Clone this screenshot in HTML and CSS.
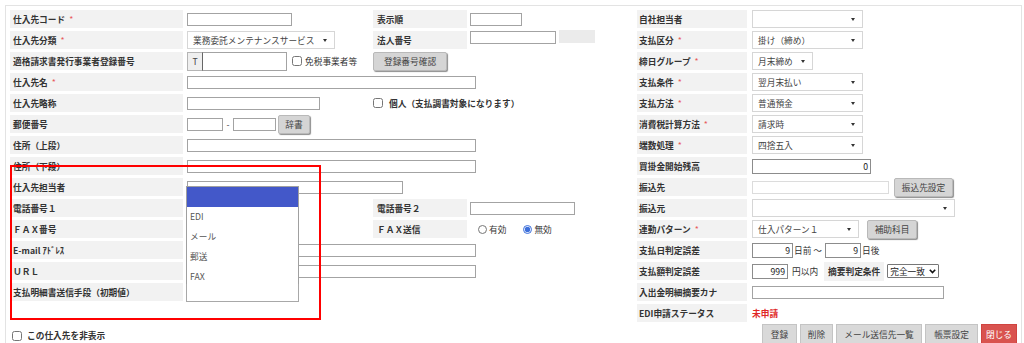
FILE: index.html
```html
<!DOCTYPE html>
<html lang="ja">
<head>
    <meta charset="UTF-8">
    <title>仕入先登録</title>
    <link rel="stylesheet" href="styles.css">
</head>
<body>
    <div class="panel">
        <div class="form">
            <!-- 1 -->
            <div class="lbl c1">仕入先コード<span class="req">*</span></div>
            <div class="cell c2"><span class="inp w105"></span></div>
            <div class="lbl c3 mid">表示順</div>
            <div class="cell c4"><span class="inp w52"></span></div>
            <div class="lbl c5">自社担当者</div>
            <div class="cell c6"><span class="sel w111"></span></div>
            <!-- 2 -->
            <div class="lbl c1">仕入先分類<span class="req">*</span></div>
            <div class="cell c2"><span class="sel w148">業務委託メンテナンスサービス</span></div>
            <div class="lbl c3 mid">法人番号</div>
            <div class="cell c4 top"><span class="inp w86"></span><span class="gray-box"></span></div>
            <div class="lbl c5">支払区分<span class="req">*</span></div>
            <div class="cell c6"><span class="sel w111">掛け（締め）</span></div>
            <!-- 3 -->
            <div class="lbl c1">適格請求書発行事業者登録番号</div>
            <div class="cell c2">
                <span class="t-box">T</span><span class="inp tall w85"></span>
                <label class="chk"><input type="checkbox">免税事業者等</label>
            </div>
            <div class="cell c3"><span class="btn">登録番号確認</span></div>
            <div class="lbl c5">締日グループ<span class="req">*</span></div>
            <div class="cell c6"><span class="sel w61">月末締め</span></div>
            <!-- 4 -->
            <div class="lbl c1">仕入先名<span class="req">*</span></div>
            <div class="cell c2-4"><span class="inp w289"></span></div>
            <div class="lbl c5">支払条件<span class="req">*</span></div>
            <div class="cell c6"><span class="sel w111">翌月末払い</span></div>
            <!-- 5 -->
            <div class="lbl c1">仕入先略称</div>
            <div class="cell c2"><span class="inp w133"></span></div>
            <div class="cell c3-4"><label class="chk bold"><input type="checkbox">個人（支払調書対象になります）</label></div>
            <div class="lbl c5">支払方法<span class="req">*</span></div>
            <div class="cell c6"><span class="sel w111">普通預金</span></div>
            <!-- 6 -->
            <div class="lbl c1">郵便番号</div>
            <div class="cell c2">
                <span class="inp w36"></span><span class="dash">-</span><span class="inp w43"></span>
                <span class="btn zip">辞書</span>
            </div>
            <div class="lbl c5">消費税計算方法<span class="req">*</span></div>
            <div class="cell c6"><span class="sel w111">請求時</span></div>
            <!-- 7 -->
            <div class="lbl c1">住所（上段）</div>
            <div class="cell c2-4"><span class="inp w289"></span></div>
            <div class="lbl c5">端数処理<span class="req">*</span></div>
            <div class="cell c6"><span class="sel w111">四捨五入</span></div>
            <!-- 8 -->
            <div class="lbl c1">住所（下段）</div>
            <div class="cell c2-4"><span class="inp w289"></span></div>
            <div class="lbl c5">買掛金開始残高</div>
            <div class="cell c6"><span class="inp num dark w119">0</span></div>
            <!-- 9 -->
            <div class="lbl c1">仕入先担当者</div>
            <div class="cell c2-4"><span class="inp w216"></span></div>
            <div class="lbl c5">振込先</div>
            <div class="cell c6"><span class="inp light w137"></span><span class="btn bank">振込先設定</span></div>
            <!-- 10 -->
            <div class="lbl c1">電話番号１</div>
            <div class="cell c2"><span class="inp w105"></span></div>
            <div class="lbl c3 mid">電話番号２</div>
            <div class="cell c4"><span class="inp w105"></span></div>
            <div class="lbl c5">振込元</div>
            <div class="cell c6"><span class="sel w203"></span></div>
            <!-- 11 -->
            <div class="lbl c1">ＦＡＸ番号</div>
            <div class="cell c2"><span class="inp w105"></span></div>
            <div class="lbl c3 mid">ＦＡＸ送信</div>
            <div class="cell c4">
                <label class="rad"><input type="radio" name="fax">有効</label>
                <label class="rad"><input type="radio" name="fax" checked>無効</label>
            </div>
            <div class="lbl c5">連動パターン<span class="req">*</span></div>
            <div class="cell c6"><span class="sel w107">仕入パターン１</span><span class="btn sub">補助科目</span></div>
            <!-- 12 -->
            <div class="lbl c1">E-mail ｱﾄﾞﾚｽ</div>
            <div class="cell c2-4"><span class="inp w289"></span></div>
            <div class="lbl c5">支払日判定誤差</div>
            <div class="cell c6">
                <span class="inp num dark w41">9</span><span class="unit">日前 〜</span>
                <span class="inp num dark w36">9</span><span class="unit">日後</span>
            </div>
            <!-- 13 -->
            <div class="lbl c1">ＵＲＬ</div>
            <div class="cell c2-4"><span class="inp w289"></span></div>
            <div class="lbl c5">支払額判定誤差</div>
            <div class="cell c6">
                <span class="inp num dark w36">999</span><span class="unit yen">円以内</span>
                <span class="lbl inline">摘要判定条件</span>
                <span class="native">完全一致<svg width="7" height="5" viewBox="0 0 7 5"><path d="M0.8 0.8 L3.5 3.6 L6.2 0.8" fill="none" stroke="#111" stroke-width="1.6"/></svg></span>
            </div>
            <!-- 14 -->
            <div class="lbl c1">支払明細書送信手段（初期値）</div>
            <div class="cell c2"><span class="plain-sel"></span></div>
            <div class="lbl c5">入出金明細摘要カナ</div>
            <div class="cell c6"><span class="inp w192"></span></div>
            <!-- 15 -->
            <div class="lbl c5">EDI申請ステータス</div>
            <div class="cell c6"><span class="status">未申請</span></div>
        </div>

        <div class="foot">
            <label class="chk bold hide-chk"><input type="checkbox">この仕入先を非表示</label>
            <div class="buttons">
                <span class="fbtn w35">登録</span>
                <span class="fbtn w33">削除</span>
                <span class="fbtn w86">メール送信先一覧</span>
                <span class="fbtn w53">帳票設定</span>
                <span class="fbtn close">閉じる</span>
            </div>
        </div>

        <!-- 開いたままのリスト -->
        <ul class="listbox">
            <li class="on"></li>
            <li>EDI</li>
            <li>メール</li>
            <li>郵送</li>
            <li>FAX</li>
        </ul>
        <div class="mark"></div>
    </div>
</body>
</html>
```

FILE: styles.css
```css
* {
    box-sizing: border-box;
    margin: 0;
    padding: 0;
}

body {
    font-family: "Noto Sans CJK JP", sans-serif;
    font-size: 8.7px;
    color: #333;
    background: #fff;
    font-feature-settings: "pkna";
}

.panel {
    position: relative;
    margin: 5px 0 0 5px;
    width: 1017px;
    height: 360px;
    border: 1px solid #e3e3e3;
    padding: 4px 4px 0 4px;
}

.form {
    display: grid;
    grid-template-columns: 177px 186px 97px 167px 115px 1fr;
    grid-auto-rows: 18px;
    row-gap: 3px;
}

.lbl {
    background: #f2f2f2;
    font-weight: bold;
    display: flex;
    align-items: center;
    padding-left: 3px;
    white-space: nowrap;
    color: #333;
}

.req {
    color: #e85a5a;
    font-weight: normal;
    margin-left: 4px;
}

.c1 { grid-column: 1; margin-right: 4px; }
.c2 { grid-column: 2; }
.c2-4 { grid-column: 2 / 5; }
.c3 { grid-column: 3; }
.c3-4 { grid-column: 3 / 5; }
.c4 { grid-column: 4; }
.c5 { grid-column: 5; margin-right: 5px; padding-left: 2px; }
.c6 { grid-column: 6; }

.mid {
    margin-right: 3px;
    padding-left: 4px;
}

.cell {
    display: flex;
    align-items: center;
    white-space: nowrap;
}

.cell.top {
    align-items: flex-start;
}

.inp {
    display: inline-block;
    height: 13px;
    border: 1px solid #a3a3a3;
    background: #fff;
    line-height: 11px;
}

.inp.tall {
    height: 19px;
    border-left-color: #666;
}

.inp.num {
    text-align: right;
    padding-right: 2px;
    color: #222;
}

.inp.dark {
    height: 15px;
    line-height: 13px;
    border-color: #8c8c8c;
}

.inp.light {
    border-color: #dcdcdc;
}

.gray-box {
    display: inline-block;
    width: 36px;
    height: 13px;
    margin-left: 3px;
    margin-top: -1px;
    background: #ebebeb;
}

.w36 { width: 36px; }
.w41 { width: 41px; }
.w43 { width: 43px; }
.w52 { width: 52px; }
.w61 { width: 61px; }
.w85 { width: 85px; }
.w86 { width: 86px; }
.w105 { width: 105px; }
.w107 { width: 107px; }
.w111 { width: 111px; }
.w119 { width: 119px; }
.w133 { width: 133px; }
.w137 { width: 137px; }
.w148 { width: 148px; }
.w192 { width: 192px; }
.w203 { width: 203px; }
.w216 { width: 216px; }
.w289 { width: 289px; }

.sel {
    position: relative;
    display: inline-flex;
    align-items: center;
    height: 18px;
    padding-left: 5px;
    border: 1px solid #d6d6d6;
    background: #fff;
    color: #444;
}

.sel::after {
    content: "";
    position: absolute;
    right: 7px;
    top: 7px;
    border-left: 2.5px solid transparent;
    border-right: 2.5px solid transparent;
    border-top: 3px solid #333;
}

.t-box {
    display: inline-flex;
    align-items: center;
    justify-content: center;
    width: 15px;
    height: 19px;
    background: #efefef;
    border: 1px solid #b5b5b5;
    border-right: 0;
    color: #444;
}

.chk {
    display: inline-flex;
    align-items: center;
    color: #333;
}

.chk input {
    width: 10px;
    height: 10px;
    margin: 0 3px 0 5px;
}

.bold {
    font-weight: bold;
}

.c3-4 .chk input {
    margin: 0 6px 0 0;
}

.btn {
    display: inline-flex;
    align-items: center;
    justify-content: center;
    height: 19px;
    width: 74px;
    background: #d5d5d5;
    border: 1px solid #b9b9b9;
    border-radius: 2px;
    box-shadow: 1px 1px 1px #8d8d8d;
    color: #444;
}

.btn.zip {
    width: 32px;
    margin-left: 2px;
}

.btn.bank {
    width: 59px;
    margin-left: 5px;
}

.btn.sub {
    width: 50px;
    margin-left: 8px;
}

.dash {
    width: 10px;
    text-align: center;
}

.rad {
    display: inline-flex;
    align-items: center;
    margin-left: 8px;
    margin-right: 9px;
    color: #333;
}

.rad input {
    width: 9px;
    height: 9px;
    margin-right: 2px;
    accent-color: #3d6fdb;
}

.unit {
    margin: 0 3px 0 1px;
    color: #333;
}

.unit.yen {
    margin-left: 4px;
    margin-right: 6px;
}

.lbl.inline {
    height: 19px;
    padding: 0 4px;
}

.native {
    display: inline-flex;
    align-items: center;
    justify-content: space-between;
    width: 52px;
    height: 14px;
    margin-left: 3px;
    padding: 0 2px;
    border: 1px solid #777;
    border-radius: 1px;
    color: #222;
}

.plain-sel {
    display: inline-block;
    width: 113px;
    height: 19px;
    margin-left: -1px;
    border: 1px solid #a8a8a8;
    background: #fff;
}

.status {
    color: #e02727;
    font-weight: bold;
}

.foot {
    display: flex;
    justify-content: space-between;
    align-items: center;
    margin-top: 2px;
}

.hide-chk input {
    margin: 0 5px 0 2px;
}

.hide-chk {
    margin-top: 3px;
}

.buttons {
    display: flex;
    gap: 3px;
}

.fbtn {
    display: inline-flex;
    align-items: center;
    justify-content: center;
    height: 20px;
    background: #d9d9d9;
    border: 1px solid #c4c4c4;
    color: #444;
}

.fbtn.w35 { width: 35px; }
.fbtn.w33 { width: 33px; }
.fbtn.w86 { width: 86px; }
.fbtn.w53 { width: 53px; }

.fbtn.close {
    width: 36px;
    background: #d9534f;
    border-color: #d04440;
    color: #fff;
}

/* 開いたリストと注記の枠 */
.listbox {
    position: absolute;
    left: 180px;
    top: 180px;
    width: 113px;
    height: 98px;
    overflow: hidden;
    list-style: none;
    background: #fff;
    border: 1px solid #a0a0a0;
    border-bottom: 0;
}

.listbox li {
    height: 20px;
    line-height: 20px;
    padding-left: 3px;
    color: #555;
}

.listbox li.on {
    background: #4358c9;
}

.mark {
    position: absolute;
    left: 4px;
    top: 159px;
    width: 311px;
    height: 155px;
    border: 2px solid #f00;
}
```
